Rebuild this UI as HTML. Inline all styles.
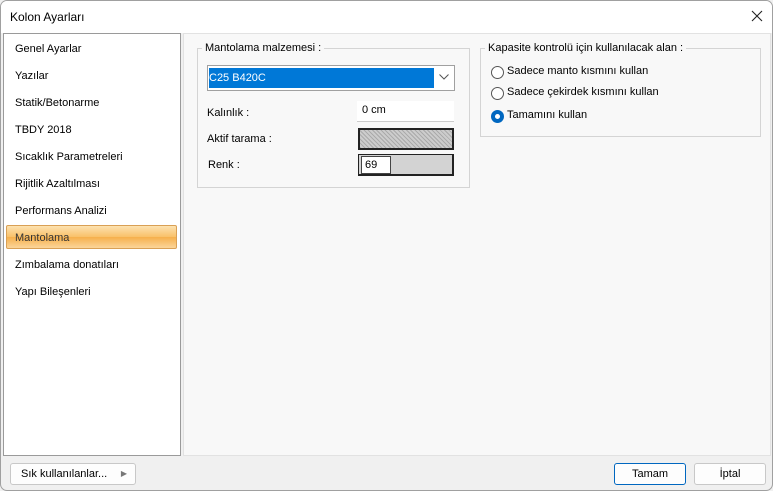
<!DOCTYPE html>
<html><head><style>
*{margin:0;padding:0;box-sizing:border-box}
body{width:773px;height:491px;overflow:hidden;font-family:"Liberation Sans",sans-serif;font-size:11px;color:#000;background:#f0f0f0;position:relative}
.a{position:absolute}
.win{left:0;top:0;width:773px;height:491px;border:1px solid #a0a0a0;border-radius:7px;background:#f0f0f0;overflow:hidden}
.title{left:0;top:0;width:773px;height:32px;background:#fff}
.left{left:2px;top:32px;width:178px;height:423px;background:#fff;border:1px solid #9a9a9a}
.item{position:absolute;left:14px;font-size:11px}
.sel{left:5px;top:224px;width:171px;height:24px;border:1px solid #d9a055;border-radius:2px;background:linear-gradient(#fde2b0,#f9c068 50%,#f6b04c 51%,#fbd59a)}
.right{left:182px;top:32px;width:588px;height:423px;background:#f8f8f8;border:1px solid #e2e2e2}
.grp{position:absolute;border:1px solid #d4d4d4}
.lg{position:absolute;background:#f8f8f8;padding:0 3px}
.btn{position:absolute;height:22px;border:1px solid #c8c8c8;border-radius:3px;background:#fdfdfd;text-align:center;line-height:20px}
.rad{position:absolute;width:13px;height:13px;border:1px solid #555;border-radius:50%;background:#fff}
</style></head><body>
<div class="a win">
<div class="a title"></div>
<div class="a" style="left:9px;top:9px;font-size:12px">Kolon Ayarları</div>
<svg class="a" style="left:750px;top:9px" width="12" height="12"><path d="M1 1L11 11M11 1L1 11" stroke="#222" stroke-width="1.1"/></svg>
<div class="a left"></div>
<div class="a sel"></div>
<div class="item" style="top:42px">Genel Ayarlar</div>
<div class="item" style="top:69px">Yazılar</div>
<div class="item" style="top:96px">Statik/Betonarme</div>
<div class="item" style="top:123px">TBDY 2018</div>
<div class="item" style="top:150px">Sıcaklık Parametreleri</div>
<div class="item" style="top:177px">Rijitlik Azaltılması</div>
<div class="item" style="top:204px">Performans Analizi</div>
<div class="item" style="top:231px;color:#333">Mantolama</div>
<div class="item" style="top:258px">Zımbalama donatıları</div>
<div class="item" style="top:285px">Yapı Bileşenleri</div>
<div class="a right"></div>
<div class="grp" style="left:196px;top:47px;width:273px;height:140px"></div>
<div class="lg" style="left:201px;top:41px">Mantolama malzemesi :</div>
<div class="a" style="left:206px;top:64px;width:248px;height:26px;border:1px solid #a0a0a0;background:#fff"></div>
<div class="a" style="left:208px;top:67px;width:225px;height:20px;background:#0078d7;color:#fff;line-height:20px">C25 B420C</div>
<svg class="a" style="left:438px;top:73px" width="10" height="6"><path d="M0.5 0.5L5 5L9.5 0.5" stroke="#555" fill="none"/></svg>
<div class="a" style="left:206px;top:106px">Kalınlık :</div>
<div class="a" style="left:356px;top:100px;width:97px;height:21px;background:#fff;border-bottom:1px solid #ccc;padding:3px 5px">0 cm</div>
<div class="a" style="left:206px;top:132px">Aktif tarama :</div>
<div class="a" style="left:357px;top:127px;width:96px;height:22px;border:2px solid #222;background:repeating-linear-gradient(45deg,#aaa 0 1px,#ccc 1px 3px)"></div>
<div class="a" style="left:207px;top:158px">Renk :</div>
<div class="a" style="left:357px;top:153px;width:96px;height:22px;border:2px solid #222;border-top-width:1px;border-left-width:1px;background:#d3d3d3"></div>
<div class="a" style="left:360px;top:155px;width:30px;height:18px;background:#fff;border:1px solid #444;padding:2px 3px">69</div>
<div class="grp" style="left:479px;top:47px;width:281px;height:89px"></div>
<div class="lg" style="left:484px;top:41px">Kapasite kontrolü için kullanılacak alan :</div>
<div class="rad" style="left:490px;top:65px"></div><div class="a" style="left:506px;top:64px">Sadece manto kısmını kullan</div>
<div class="rad" style="left:490px;top:86px"></div><div class="a" style="left:506px;top:85px">Sadece çekirdek kısmını kullan</div>
<div class="rad" style="left:490px;top:109px;border:4px solid #0067c0"></div><div class="a" style="left:506px;top:108px">Tamamını kullan</div>
<div class="btn" style="left:9px;top:462px;width:126px;text-align:left;padding-left:10px">Sık kullanılanlar...<span style="position:absolute;right:8px;color:#777;font-size:8px">▶</span></div>
<div class="btn" style="left:613px;top:462px;width:72px;border:1px solid #0067c0">Tamam</div>
<div class="btn" style="left:693px;top:462px;width:72px">İptal</div>
</div>
</body></html>
